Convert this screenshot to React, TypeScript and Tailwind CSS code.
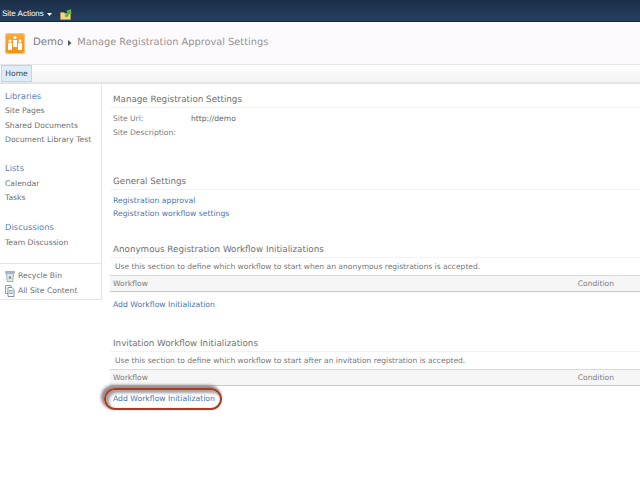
const font = { fontFamily: '"DejaVu Sans", Verdana, sans-serif', textRendering: "geometricPrecision" as const };

function SectionTitle({ children, className = "" }: { children: React.ReactNode; className?: string }) {
  return <div className={`h-[17px] pl-[3px] pt-[2px] text-[8.75px] leading-[14px] text-[#707070] border-b border-[#f2f2f2] ${className}`}>{children}</div>;
}

function WorkflowBlock({ title, desc, link, linkMark }: { title: string; desc: string; link: string; linkMark?: boolean }) {
  return (
    <div>
      <SectionTitle>{title}</SectionTitle>
      <div className="h-[17px] pl-[5px] pt-[3px] text-[7.55px] leading-[11px] text-[#757575]">{desc}</div>
      <div className="h-[17px] bg-[#f6f6f6] border-t border-[#d9d9d9] border-b border-b-[#c3cad6] flex justify-between items-center pl-[3px] pr-[26px] text-[7.6px] text-[#808080]">
        <span>Workflow</span>
        <span>Condition</span>
      </div>
      <div className="relative pl-[3px] mt-[7px] text-[7.7px] leading-[11px] text-[#4a76b2]">
        {linkMark && (
          <div className="absolute left-[-6px] top-[-5px] w-[118px] h-[22px] rounded-full border-[2px] border-[#b03a20] shadow-[-2px_-2px_3px_1px_#8c8c8c,inset_2px_2px_3px_1px_#a0a0a0]" />
        )}
        <span className="relative">{link}</span>
      </div>
    </div>
  );
}

function NavHead({ children }: { children: React.ReactNode }) {
  return <div className="pl-[5px] text-[8.4px] leading-[14px] text-[#5a82bd]">{children}</div>;
}
function NavItem({ children }: { children: React.ReactNode }) {
  return <div className="pl-[5px] text-[7.65px] leading-[14.5px] text-[#707070]">{children}</div>;
}

export default function App() {
  return (
    <div className="w-[640px] h-[485px] overflow-hidden bg-white flex flex-col" style={font}>
      <div className="h-[22px] shrink-0 bg-gradient-to-b from-[#1b2f48] to-[#25405f] border-b border-[#16273c] flex items-end pl-[2px] font-['Liberation_Sans',sans-serif] text-[8px] leading-[14px] text-white">
        <span>Site Actions</span>
        <svg width="5" height="3" viewBox="0 0 5 3" className="ml-[3px] mb-[5px]"><path d="M0 0h5L2.500 3z" fill="#fff" /></svg>
        <svg width="12" height="11" viewBox="0 0 12 11" className="ml-[8px] mb-[1px]">
          <path d="M0.500 3.500h3.500l1 1h5.500v6h-10z" fill="#f3d67f" stroke="#b9953f" strokeWidth="0.700" />
          <path d="M4.500 7 7.500 3.200 6 2 11 0 11.500 5 10 4 7 8.500z" fill="#62b33c" />
        </svg>
      </div>
      <div className="h-[43px] shrink-0 bg-[#fdfafd] border-b border-[#e6e4e6] flex items-center pl-[5px]">
        <svg width="20" height="21" viewBox="0 0 20 21">
          <defs>
            <linearGradient id="lg" x1="0" y1="0" x2="0" y2="1"><stop offset="0" stopColor="#f9a93a" /><stop offset="1" stopColor="#f48f12" /></linearGradient>
          </defs>
          <rect x="0" y="0" width="20" height="21" rx="3" fill="url(#lg)" />
          <rect x="0.500" y="0.500" width="19" height="20" rx="3" fill="none" stroke="#fbc77b" />
          <circle cx="5" cy="8" r="1.500" fill="#fff" /><rect x="3" y="10" width="4" height="7" fill="#fff" />
          <circle cx="10" cy="4.500" r="1.500" fill="#fff" /><rect x="8" y="7" width="4" height="7" fill="#fff" />
          <circle cx="15" cy="8" r="1.500" fill="#fff" /><rect x="13" y="10" width="4" height="7" fill="#fff" />
        </svg>
        <span className="ml-[8px] text-[10.2px] text-[#7d7d7d]">Demo</span>
        <svg width="4" height="6" viewBox="0 0 4 6" className="mx-[5px]"><path d="M0 0l3.500 3L0 6z" fill="#555" /></svg>
        <span className="text-[9.8px] text-[#949494]">Manage Registration Approval Settings</span>
      </div>
      <div className="h-[19px] shrink-0 bg-gradient-to-b from-[#fff] to-[#f3f3f3] border-b-[2px] border-[#e4e4e4] pl-[1px]">
        <div className="w-[31px] h-[17px] bg-[#dcedf9] border border-[#b3d8f0] text-[7.6px] leading-[15px] text-center text-[#444]">Home</div>
      </div>
      <div className="flex flex-1 min-h-0">
        <div className="w-[102px] shrink-0 self-start h-[216px] border-r border-b border-[#e4e4e4] flex flex-col pt-[5px]">
          <NavHead>Libraries</NavHead>
          <div className="mt-[1px]"><NavItem>Site Pages</NavItem><NavItem>Shared Documents</NavItem><NavItem>Document Library Test</NavItem></div>
          <div className="mt-[13px]"><NavHead>Lists</NavHead></div>
          <div className="mt-[2px]"><NavItem>Calendar</NavItem><NavItem>Tasks</NavItem></div>
          <div className="mt-[14px]"><NavHead>Discussions</NavHead></div>
          <div className="mt-[2px]"><NavItem>Team Discussion</NavItem></div>
          <div className="mt-[13px] border-t border-[#e4e4e4] pt-[4px] pl-[5px] text-[7.65px] leading-[15px] text-[#707070]">
            <div className="flex items-center gap-[3px]">
              <svg width="10" height="12" viewBox="0 0 10 12"><path d="M0.500 1.500h9v1.500h-9zM1.500 3h7l-.7 8.500h-5.600z" fill="#dfe8ee" stroke="#7d97ad" strokeWidth="0.700" /><path d="M3.500 8.500l1.500-3 1.500 3z" fill="#4f9a3c" /></svg>
              <span>Recycle Bin</span>
            </div>
            <div className="flex items-center gap-[3px]">
              <svg width="10" height="12" viewBox="0 0 10 12"><path d="M0.500 0.500h5.500v8h-5.500z" fill="#f0f5fa" stroke="#5c7c9c" strokeWidth="0.700" /><path d="M3 2.500h4l2 2v7h-6z" fill="#fff" stroke="#4c6c90" strokeWidth="0.700" /><path d="M4 5.500h4M4 7h4M4 8.500h4" stroke="#5c7c9c" strokeWidth="0.600" /></svg>
              <span>All Site Content</span>
            </div>
          </div>
        </div>
        <div className="flex-1 pl-[8px] pt-[7px]">
          <SectionTitle>Manage Registration Settings</SectionTitle>
          <div className="mt-[4px] text-[7.6px] leading-[14px] text-[#808080] pl-[3px]">
            <div className="flex"><span className="w-[78px]">Site Url:</span><span className="text-[#666]">http://demo</span></div>
            <div>Site Description:</div>
          </div>
          <SectionTitle className="mt-[33px]">General Settings</SectionTitle>
          <div className="mt-[4px] pl-[3px] text-[7.7px] leading-[13px] text-[#4a76b2]">
            <div>Registration approval</div>
            <div>Registration workflow settings</div>
          </div>
          <div className="mt-[21px]">
            <WorkflowBlock title="Anonymous Registration Workflow Initializations" desc="Use this section to define which workflow to start when an anonymous registrations is accepted." link="Add Workflow Initialization" />
          </div>
          <div className="mt-[25px]">
            <WorkflowBlock title="Invitation Workflow Initializations" desc="Use this section to define which workflow to start after an invitation registration is accepted." link="Add Workflow Initialization" linkMark />
          </div>
        </div>
      </div>
    </div>
  );
}
